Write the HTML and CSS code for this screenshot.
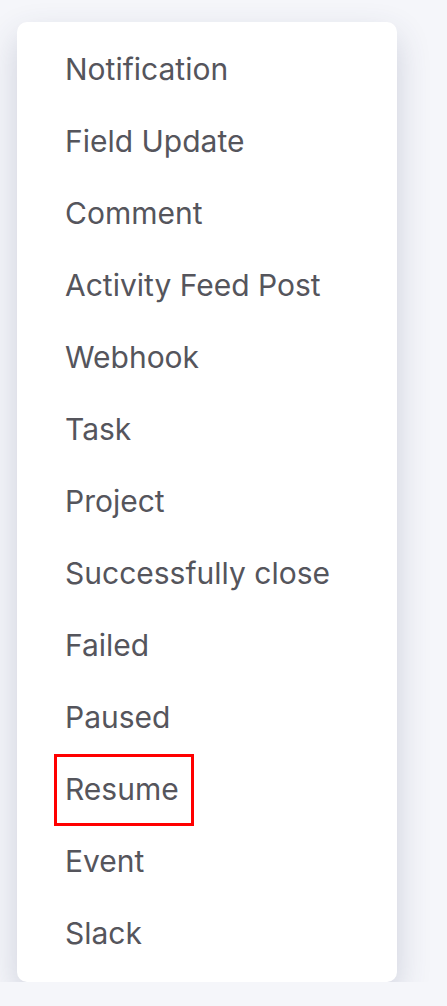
FILE: index.html
```html
<!DOCTYPE html>
<html lang="en">
<head>
    <meta charset="UTF-8">
    <meta name="viewport" content="width=device-width, initial-scale=1.0">
    <title>Actions</title>
    <link rel="stylesheet" href="styles.css">
</head>
<body>
    <div class="menu">
        <ul class="menu-list">
            <li class="menu-item">Notification</li>
            <li class="menu-item">Field Update</li>
            <li class="menu-item">Comment</li>
            <li class="menu-item">Activity Feed Post</li>
            <li class="menu-item">Webhook</li>
            <li class="menu-item">Task</li>
            <li class="menu-item">Project</li>
            <li class="menu-item">Successfully close</li>
            <li class="menu-item">Failed</li>
            <li class="menu-item">Paused</li>
            <li class="menu-item selected">Resume</li>
            <li class="menu-item">Event</li>
            <li class="menu-item">Slack</li>
        </ul>
    </div>
</body>
</html>
```

FILE: styles.css
```css
body {
    font-family: Inter, "Noto Sans", sans-serif;
    margin: 0;
    padding: 0;
    background-color: #f5f6fa;
}

.menu {
    margin: 22px 0 0 17px;
    width: 380px;
    background-color: #fff;
    border-radius: 10px;
    box-shadow: 0 14px 34px rgba(50, 60, 100, 0.2);
    padding: 12px 0;
}

.menu-list {
    list-style: none;
    margin: 0;
    padding: 0 0 0 37px;
}

.menu-item {
    width: fit-content;
    height: 72px;
    line-height: 70px;
    padding: 0 15px 0 11px;
    font-size: 30px;
    color: #55555c;
    box-sizing: border-box;
}

.menu-item.selected {
    outline: 3px solid #ff0000;
    outline-offset: -3px;
}
```
